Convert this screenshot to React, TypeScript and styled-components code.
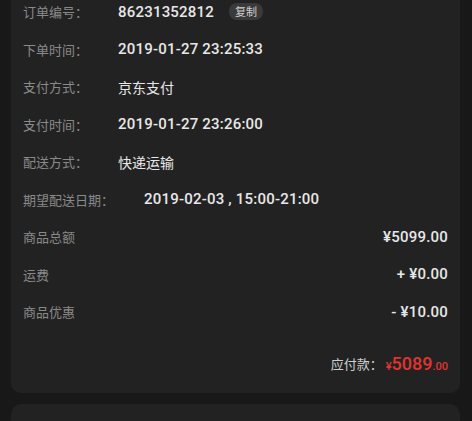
import React from "react";
import styled, { createGlobalStyle } from "styled-components";

const GlobalStyle = createGlobalStyle`
  html, body {
    margin: 0;
    padding: 0;
    background: #181818;
    overflow: hidden;
  }
  body {
    font-family: Roboto, "Noto Sans CJK SC", sans-serif;
  }
`;

const Page = styled.div`
  width: 472px;
  height: 421px;
  overflow: hidden;
  display: flex;
  flex-direction: column;
  gap: 11px;
`;

const Card = styled.div`
  margin: -15px 12px 0 11px;
  padding: 8px 12px 11px 12px;
  background: #222222;
  border-radius: 10px;
  display: flex;
  flex-direction: column;
`;

const NextCard = styled.div`
  margin: 0 12px 0 11px;
  height: 60px;
  background: #222222;
  border-radius: 10px;
  flex-shrink: 0;
`;

const Row = styled.div`
  height: 37.5px;
  display: flex;
  align-items: center;
  gap: 30px;
`;

const SplitRow = styled(Row)`
  justify-content: space-between;
`;

const Label = styled.span`
  font-family: "Noto Sans CJK SC", sans-serif;
  font-size: 13px;
  color: #8a8a8a;
  white-space: nowrap;
`;

const Value = styled.span<{ $cjk?: boolean }>`
  font-family: ${(p) => (p.$cjk ? `"Noto Sans CJK SC", sans-serif` : `Roboto, "Noto Sans CJK SC", sans-serif`)};
  font-size: ${(p) => (p.$cjk ? "14px" : "15px")};
  font-weight: ${(p) => (p.$cjk ? 400 : 500)};
  color: #e8e8e8;
  white-space: nowrap;
  letter-spacing: ${(p) => (p.$cjk ? "0" : "0.2px")};
`;

const ValueGroup = styled.span`
  display: flex;
  align-items: center;
  gap: 15px;
`;

const CopyBadge = styled.span`
  font-family: "Noto Sans CJK SC", sans-serif;
  font-size: 11px;
  color: #d0d0d0;
  background: #3a3a3a;
  border-radius: 8px;
  padding: 0 6px;
  height: 17px;
  line-height: 17px;
`;

const TotalRow = styled.div`
  margin-top: 14px;
  height: 37.5px;
  display: flex;
  align-items: center;
  justify-content: flex-end;
`;

const TotalLabel = styled.span`
  font-family: "Noto Sans CJK SC", sans-serif;
  font-size: 13px;
  color: #d0d0d0;
  margin-right: 3px;
`;

const Price = styled.span<{ $size: number }>`
  font-family: Roboto, sans-serif;
  font-size: ${(p) => p.$size}px;
  color: #e2342f;
  font-weight: 500;
`;

const Amount = styled.span`
  display: flex;
  align-items: baseline;
`;

type Info = { label: string; value: string; cjk?: boolean; copy?: boolean };

const infos: Info[] = [
  { label: "订单编号：", value: "86231352812", copy: true },
  { label: "下单时间：", value: "2019-01-27 23:25:33" },
  { label: "支付方式：", value: "京东支付", cjk: true },
  { label: "支付时间：", value: "2019-01-27 23:26:00" },
  { label: "配送方式：", value: "快递运输", cjk: true },
  { label: "期望配送日期：", value: "2019-02-03 , 15:00-21:00" },
];

const fees = [
  { label: "商品总额", value: "¥5099.00" },
  { label: "运费", value: "+ ¥0.00" },
  { label: "商品优惠", value: "- ¥10.00" },
];

export default function App() {
  return (
    <Page>
      <GlobalStyle />
      <Card>
        {infos.map((i) => (
          <Row key={i.label}>
            <Label>{i.label}</Label>
            <ValueGroup>
              <Value $cjk={i.cjk}>{i.value}</Value>
              {i.copy && <CopyBadge>复制</CopyBadge>}
            </ValueGroup>
          </Row>
        ))}
        {fees.map((f) => (
          <SplitRow key={f.label}>
            <Label>{f.label}</Label>
            <Value>{f.value}</Value>
          </SplitRow>
        ))}
        <TotalRow>
          <TotalLabel>应付款：</TotalLabel>
          <Amount>
            <Price $size={11}>¥</Price>
            <Price $size={18}>5089</Price>
            <Price $size={11}>.00</Price>
          </Amount>
        </TotalRow>
      </Card>
      <NextCard />
    </Page>
  );
}
